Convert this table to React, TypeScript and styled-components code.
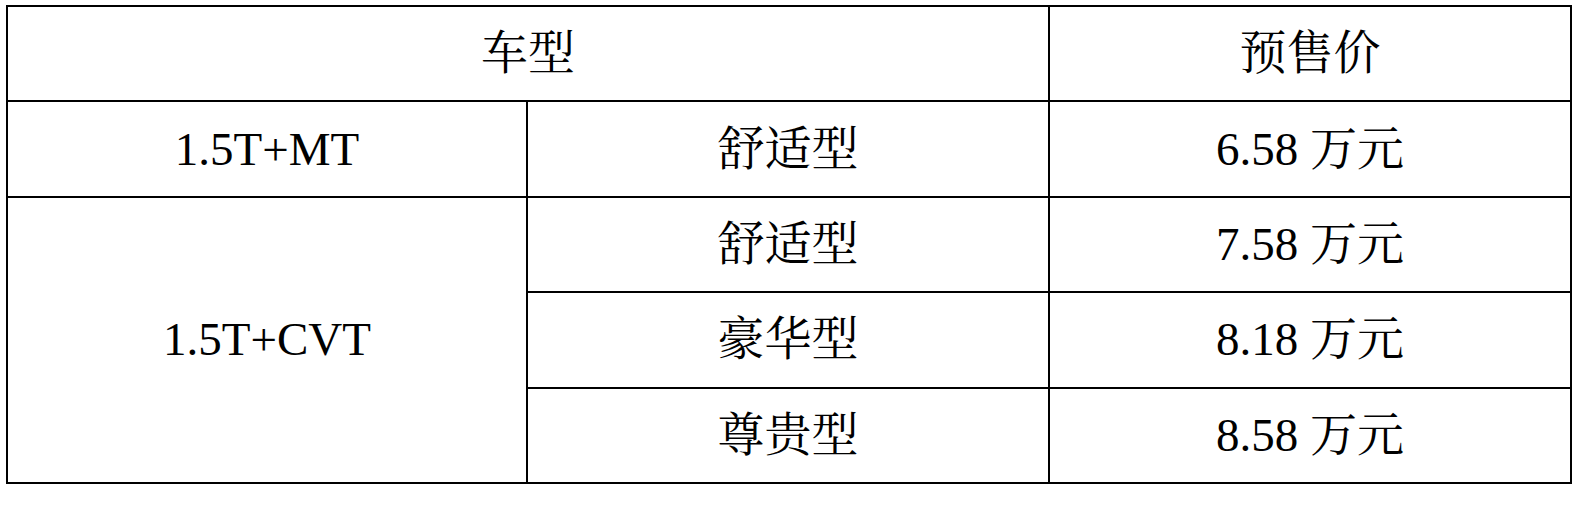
import styled, { createGlobalStyle } from 'styled-components';

const GlobalStyle = createGlobalStyle`
  html, body {
    margin: 0;
    padding: 0;
    background: #fff;
  }
`;

const Page = styled.div`
  padding: 5px 0 0 6px;
`;

const PriceTable = styled.table`
  width: 1566px;
  border-collapse: collapse;
  table-layout: fixed;
  border: 2px solid #000;
  font-family: 'Liberation Serif', 'Noto Serif CJK SC', 'Noto Sans CJK SC', serif;
  font-size: 47px;
  color: #000;
`;

const Row = styled.tr`
  height: 95.4px;
`;

const Cell = styled.td`
  border: 2px solid #000;
  padding: 0;
  text-align: center;
  vertical-align: middle;
  font-weight: 400;
  line-height: 1;
`;

const HeadCell = styled(Cell).attrs({ as: 'th' })``;

type Variant = { trim: string; price: string };

const cvtVariants: Variant[] = [
  { trim: '舒适型', price: '7.58 万元' },
  { trim: '豪华型', price: '8.18 万元' },
  { trim: '尊贵型', price: '8.58 万元' },
];

export default function App() {
  return (
    <Page>
      <GlobalStyle />
      <PriceTable>
        <colgroup>
          <col style={{ width: 520 }} />
          <col style={{ width: 522 }} />
          <col style={{ width: 522 }} />
        </colgroup>
        <thead>
          <Row>
            <HeadCell colSpan={2}>车型</HeadCell>
            <HeadCell>预售价</HeadCell>
          </Row>
        </thead>
        <tbody>
          <Row>
            <Cell>1.5T+MT</Cell>
            <Cell>舒适型</Cell>
            <Cell>6.58 万元</Cell>
          </Row>
          {cvtVariants.map((v, i) => (
            <Row key={v.trim}>
              {i === 0 && <Cell rowSpan={cvtVariants.length}>1.5T+CVT</Cell>}
              <Cell>{v.trim}</Cell>
              <Cell>{v.price}</Cell>
            </Row>
          ))}
        </tbody>
      </PriceTable>
    </Page>
  );
}
